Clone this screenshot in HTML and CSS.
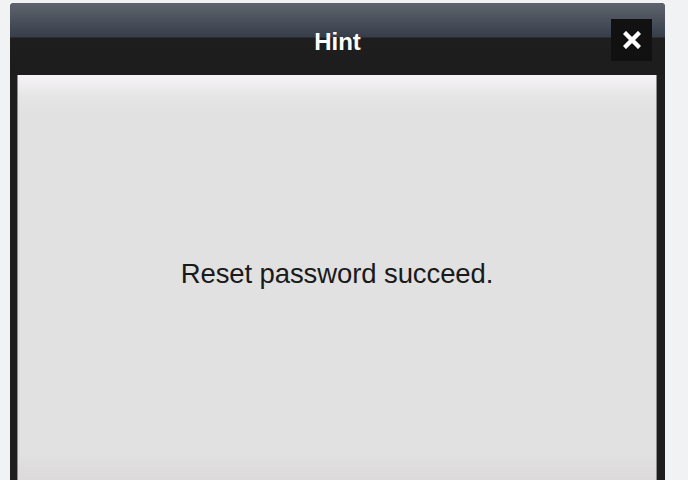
FILE: index.html
```html
<!DOCTYPE html>
<html>
<head>
<meta charset="utf-8">
<link rel="stylesheet" href="styles.css">
</head>
<body>
<div class="dialog">
  <div class="header">
    <div class="spacer"></div>
    <div class="title">Hint</div>
    <button class="close" aria-label="Close">
      <svg width="18" height="18" viewBox="0 0 18 18"><path d="M3 3 L15 15 M15 3 L3 15" stroke="#fff" stroke-width="4.4" stroke-linecap="square"/></svg>
    </button>
  </div>
  <div class="body">
    <p class="message">Reset password succeed.</p>
  </div>
</div>
</body>
</html>
```

FILE: styles.css
```css
html, body {
  margin: 0;
  padding: 0;
  background: #f1f2f4;
  overflow: hidden;
}
body {
  height: 480px;
  font-family: "Liberation Sans", Arial, sans-serif;
}
.dialog {
  margin: 3px 0 0 10px;
  width: 655px;
  height: 477px;
  border-radius: 4px 4px 0 0;
  background: #1e1e1e;
  display: flex;
  flex-direction: column;
  overflow: hidden;
}
.header {
  height: 72px;
  flex: none;
  display: grid;
  grid-template-columns: 1fr auto 1fr;
  align-items: start;
  background: linear-gradient(to bottom, #5e636d 0, #4a505b 18px, #363e4a 34px, #1e1e1e 35px, #1c1c1c 72px);
}
.title {
  margin-top: 27px;
  color: #fff;
  font-weight: bold;
  font-size: 24px;
  line-height: 24px;
}
.close {
  justify-self: end;
  margin: 16px 13px 0 0;
  width: 41px;
  height: 42px;
  padding: 0;
  border: none;
  background: #111;
  display: flex;
  align-items: center;
  justify-content: center;
}
.body {
  flex: 1;
  margin: 0 8px 0 7px;
  background: linear-gradient(to bottom, #f6f4f6 0, #e6e5e6 22px, #e1e1e1 40px, #e1e1e1 380px, #dedcdc 392px, #dcdada 100%);
  box-shadow: inset 1px 0 0 #8c8c8c, inset -1px 0 0 #8c8c8c;
}
.message {
  margin: 0;
  padding-top: 185px;
  text-align: center;
  color: #1a1a1a;
  font-size: 27.5px;
  line-height: 28px;
  letter-spacing: -0.1px;
}
```
